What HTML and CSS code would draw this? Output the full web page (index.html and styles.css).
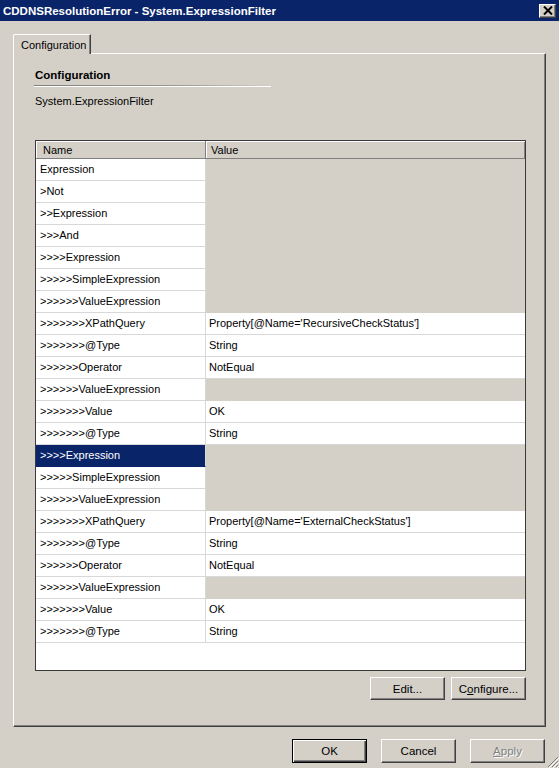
FILE: index.html
```html
<!DOCTYPE html>
<html>
<head>
<meta charset="utf-8">
<link rel="stylesheet" href="styles.css">
</head>
<body>
<div class="window">
  <div class="titlebar">
    <span class="title">CDDNSResolutionError - System.ExpressionFilter</span>
    <span class="close"><svg width="10" height="9" viewBox="0 0 10 9"><path d="M1 0.5 L9 8.5 M9 0.5 L1 8.5" stroke="#000" stroke-width="2" fill="none"/></svg></span>
  </div>
  <div class="content">
    <div class="tabstrip"><div class="tab">Configuration</div></div>
    <div class="panel">
      <div class="heading">Configuration</div>
      <div class="rule"></div>
      <div class="subtitle">System.ExpressionFilter</div>
      <div class="grid">
        <div class="grid-head">
          <div class="hcell hname">Name</div>
          <div class="hcell hvalue">Value</div>
        </div>
        <div class="rows">
          <div class="row"><div class="cell name">Expression</div><div class="cell value empty"></div></div>
          <div class="row"><div class="cell name">&gt;Not</div><div class="cell value empty"></div></div>
          <div class="row"><div class="cell name">&gt;&gt;Expression</div><div class="cell value empty"></div></div>
          <div class="row"><div class="cell name">&gt;&gt;&gt;And</div><div class="cell value empty"></div></div>
          <div class="row"><div class="cell name">&gt;&gt;&gt;&gt;Expression</div><div class="cell value empty"></div></div>
          <div class="row"><div class="cell name">&gt;&gt;&gt;&gt;&gt;SimpleExpression</div><div class="cell value empty"></div></div>
          <div class="row"><div class="cell name">&gt;&gt;&gt;&gt;&gt;&gt;ValueExpression</div><div class="cell value empty"></div></div>
          <div class="row"><div class="cell name">&gt;&gt;&gt;&gt;&gt;&gt;&gt;XPathQuery</div><div class="cell value">Property[@Name='RecursiveCheckStatus']</div></div>
          <div class="row"><div class="cell name">&gt;&gt;&gt;&gt;&gt;&gt;&gt;@Type</div><div class="cell value">String</div></div>
          <div class="row"><div class="cell name">&gt;&gt;&gt;&gt;&gt;&gt;Operator</div><div class="cell value">NotEqual</div></div>
          <div class="row"><div class="cell name">&gt;&gt;&gt;&gt;&gt;&gt;ValueExpression</div><div class="cell value empty"></div></div>
          <div class="row"><div class="cell name">&gt;&gt;&gt;&gt;&gt;&gt;&gt;Value</div><div class="cell value">OK</div></div>
          <div class="row"><div class="cell name">&gt;&gt;&gt;&gt;&gt;&gt;&gt;@Type</div><div class="cell value">String</div></div>
          <div class="row"><div class="cell name selected">&gt;&gt;&gt;&gt;Expression</div><div class="cell value empty"></div></div>
          <div class="row"><div class="cell name">&gt;&gt;&gt;&gt;&gt;SimpleExpression</div><div class="cell value empty"></div></div>
          <div class="row"><div class="cell name">&gt;&gt;&gt;&gt;&gt;&gt;ValueExpression</div><div class="cell value empty"></div></div>
          <div class="row"><div class="cell name">&gt;&gt;&gt;&gt;&gt;&gt;&gt;XPathQuery</div><div class="cell value">Property[@Name='ExternalCheckStatus']</div></div>
          <div class="row"><div class="cell name">&gt;&gt;&gt;&gt;&gt;&gt;&gt;@Type</div><div class="cell value">String</div></div>
          <div class="row"><div class="cell name">&gt;&gt;&gt;&gt;&gt;&gt;Operator</div><div class="cell value">NotEqual</div></div>
          <div class="row"><div class="cell name">&gt;&gt;&gt;&gt;&gt;&gt;ValueExpression</div><div class="cell value empty"></div></div>
          <div class="row"><div class="cell name">&gt;&gt;&gt;&gt;&gt;&gt;&gt;Value</div><div class="cell value">OK</div></div>
          <div class="row"><div class="cell name">&gt;&gt;&gt;&gt;&gt;&gt;&gt;@Type</div><div class="cell value">String</div></div>
        </div>
      </div>
      <div class="grid-actions">
        <button class="btn">Edit...</button>
        <button class="btn">C<u>o</u>nfigure...</button>
      </div>
    </div>
    <div class="dialog-actions">
      <button class="btn default">OK</button>
      <button class="btn">Cancel</button>
      <button class="btn disabled"><u>A</u>pply</button>
    </div>
  </div>
  <svg class="grip" width="12" height="12" viewBox="0 0 12 12">
    <path d="M11 1 L1 11 M11 5 L5 11 M11 9 L9 11" stroke="#808080" stroke-width="1" fill="none"/>
    <path d="M12 2 L2 12 M12 6 L6 12 M12 10 L10 12" stroke="#ffffff" stroke-width="1" fill="none"/>
  </svg>
</div>
</body>
</html>
```
FILE: styles.css
```css
* { box-sizing: border-box; }
html, body { margin: 0; padding: 0; }
body {
  width: 559px;
  height: 768px;
  overflow: hidden;
  background: #d4d0c8;
  font-family: "Liberation Sans", Arial, sans-serif;
  font-size: 11px;
  color: #000;
}
.window {
  position: relative;
  width: 559px;
  height: 768px;
}
.titlebar {
  height: 21px;
  background: #0a246a;
  display: flex;
  align-items: center;
  justify-content: space-between;
  padding: 0 3px 0 3px;
}
.title {
  color: #fff;
  font-weight: bold;
  font-size: 11.5px;
  white-space: nowrap;
}
.close {
  width: 17px;
  height: 14px;
  background: #d4d0c8;
  border: 1px solid;
  border-color: #fff #404040 #404040 #fff;
  box-shadow: inset -1px -1px #808080;
  display: flex;
  align-items: center;
  justify-content: center;
}
.content {
  padding: 13px 14px 0 13px;
}
.tabstrip {
  display: flex;
  height: 20px;
  margin-bottom: -1px;
  position: relative;
  z-index: 1;
}
.tab {
  width: 78px;
  height: 20px;
  background: #d4d0c8;
  border-top: 1px solid #fff;
  border-left: 1px solid #fff;
  border-right: 1px solid #404040;
  border-top-left-radius: 2px;
  box-shadow: inset -1px 0 #808080;
  padding: 3px 0 0 7px;
  line-height: 14px;
}
.panel {
  width: 533px;
  height: 674px;
  border: 1px solid;
  border-color: #fff #404040 #404040 #fff;
  box-shadow: inset -1px -1px #808080;
  padding: 14px 17px 0 21px;
}
.heading {
  font-weight: bold;
  font-size: 11.5px;
  line-height: 14px;
  height: 14px;
}
.rule {
  margin: 3px 0 0 -1px;
  width: 237px;
  height: 1px;
  background: linear-gradient(to right, #808080 0%, #9a9890 60%, #d4d0c8 100%);
  box-shadow: 0 1px #fff;
}
.subtitle {
  margin-top: 8px;
  line-height: 14px;
  height: 14px;
}
.grid {
  margin-top: 32px;
  width: 491px;
  height: 531px;
  border: 1px solid #3a3a3a;
  background: #fff;
  overflow: hidden;
}
.grid-head {
  display: flex;
  height: 18px;
  background: #d4d0c8;
  border-bottom: 1px solid #808080;
  box-shadow: inset 0 1px #fff;
}
.hcell {
  line-height: 18px;
  height: 17px;
}
.hname {
  width: 170px;
  padding-left: 7px;
  border-right: 1px solid #808080;
  box-shadow: inset 1px 1px #fff;
}
.hvalue {
  flex: 1;
  padding-left: 5px;
  box-shadow: inset 1px 1px #fff, inset -1px 0 #808080;
}
.row {
  display: flex;
  height: 22px;
}
.cell {
  height: 22px;
  line-height: 21px;
  border-bottom: 1px solid #d8d8d8;
  white-space: nowrap;
}
.name {
  width: 170px;
  padding-left: 4px;
  border-right: 1px solid #d8d8d8;
}
.value {
  flex: 1;
  padding-left: 3px;
}
.value.empty {
  background: #d4d0c8;
  border-bottom-color: #d4d0c8;
}
.name.selected {
  background: #0a246a;
  color: #fff;
  border-bottom-color: #0a246a;
}
.grid-actions {
  width: 491px;
  margin-top: 6px;
  display: flex;
  justify-content: flex-end;
  gap: 6px;
}
.btn {
  width: 75px;
  height: 23px;
  padding: 0;
  background: #d4d0c8;
  border: 1px solid;
  border-color: #fff #404040 #404040 #fff;
  box-shadow: inset -1px -1px #808080;
  font-family: "Liberation Sans", Arial, sans-serif;
  font-size: 11.5px;
  color: #000;
}
.dialog-actions {
  margin-top: 12px;
  display: flex;
  justify-content: flex-end;
  gap: 14px;
}
.dialog-actions .btn {
  height: 24px;
}
.btn.default {
  border: 1px solid #000;
  box-shadow: inset 1px 1px #fff, inset -1px -1px #404040, inset -2px -2px #808080;
}
.btn.disabled {
  color: #808080;
  text-shadow: 1px 1px #fff;
}
.grip {
  position: absolute;
  right: 0;
  bottom: 0;
}
```
